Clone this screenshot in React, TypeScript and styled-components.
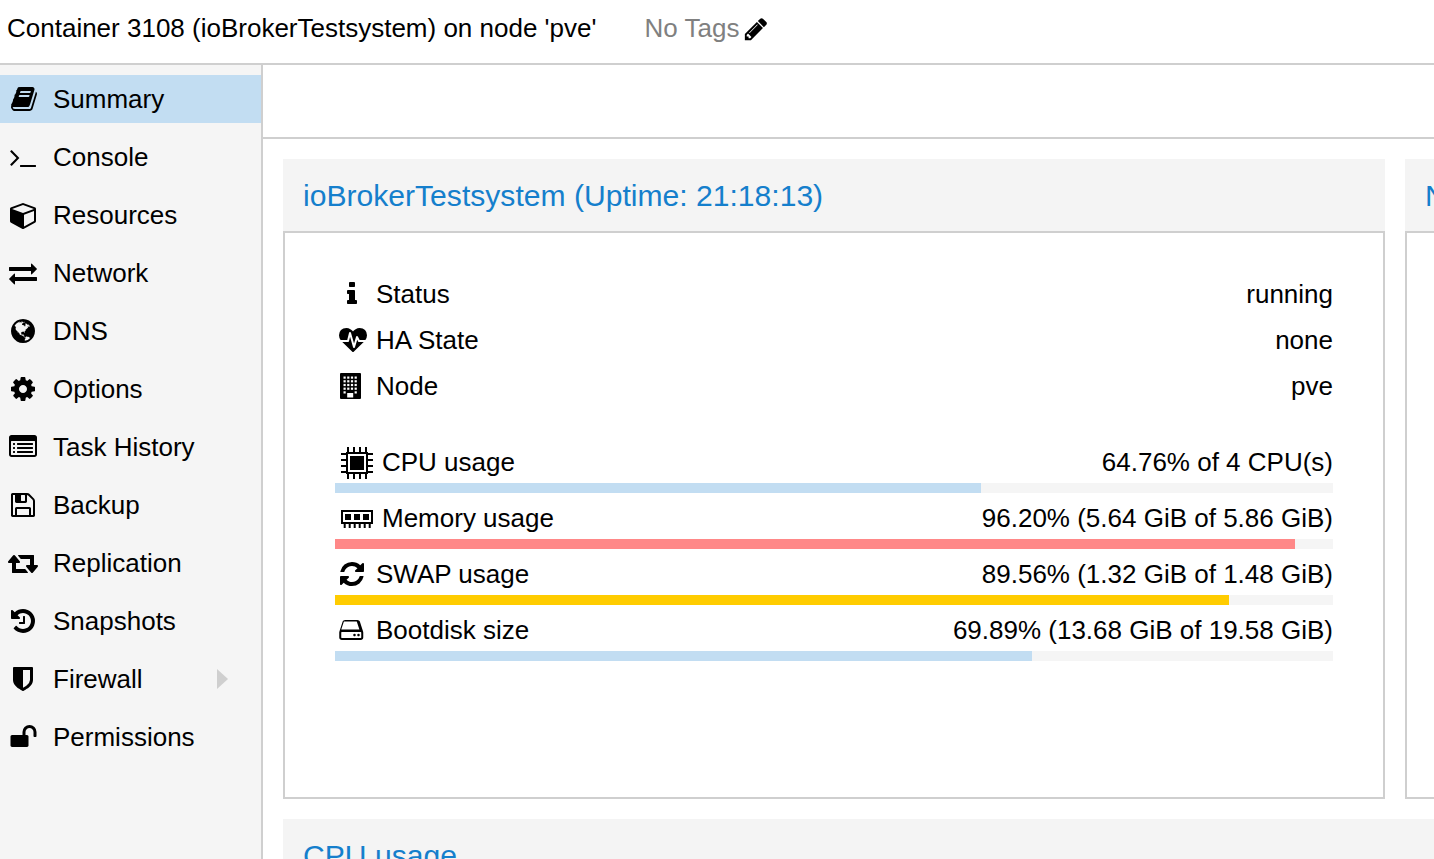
import React from 'react';
import styled, { createGlobalStyle } from 'styled-components';

const Global = createGlobalStyle`
  html, body { margin: 0; padding: 0; height: 100%; background: #fff; overflow: hidden; }
  body { font-family: "Liberation Sans", Arial, sans-serif; color: #000; }
  #root { height: 100vh; }
`;

const Page = styled.div`
  height: 859px;
  width: 1434px;
  display: flex;
  flex-direction: column;
  overflow: hidden;
`;

const Header = styled.header`
  height: 63px;
  flex: none;
  display: flex;
  align-items: center;
  padding: 0 0 6px 7px;
  box-sizing: border-box;
  font-size: 26px;
`;

const HeaderRule = styled.div`
  height: 2px;
  flex: none;
  background: #cfcfcf;
`;

const Title = styled.span`
  white-space: nowrap;
`;

const Tags = styled.span`
  margin-left: 48px;
  color: #808080;
  display: inline-flex;
  align-items: center;
  white-space: nowrap;
  gap: 4px;
`;

const Body = styled.div`
  flex: 1;
  min-height: 0;
  display: flex;
`;

const Sidebar = styled.nav`
  width: 261px;
  flex: none;
  box-sizing: content-box;
  background: #f5f5f5;
  border-right: 2px solid #cfcfcf;
  padding-top: 10px;
  display: flex;
  flex-direction: column;
  gap: 10px;
`;

const NavItem = styled.div<{ $active?: boolean }>`
  height: 48px;
  display: flex;
  align-items: center;
  font-size: 26px;
  background: ${p => (p.$active ? '#c2ddf2' : 'transparent')};
`;

const NavIconBox = styled.span`
  width: 44px;
  margin-left: 9px;
  flex: none;
  display: flex;
`;

const NavLabel = styled.span`
  flex: 1;
`;

const Chevron = styled.span`
  width: 0;
  height: 0;
  border-top: 10px solid transparent;
  border-bottom: 10px solid transparent;
  border-left: 11px solid #cfcfcf;
  margin-right: 33px;
`;

const Main = styled.main`
  flex: 1;
  min-width: 0;
  display: flex;
  flex-direction: column;
  overflow: hidden;
`;

const Toolbar = styled.div`
  height: 72px;
  flex: none;
  border-bottom: 2px solid #cfcfcf;
`;

const Content = styled.div`
  flex: 1;
  padding: 20px 0 0 20px;
  display: flex;
  flex-direction: column;
  gap: 20px;
  overflow: hidden;
`;

const PanelRow = styled.div`
  display: flex;
  gap: 20px;
  flex: none;
`;

const Panel = styled.section<{ $width: number }>`
  width: ${p => p.$width}px;
  flex: none;
`;

const PanelTitle = styled.h2`
  margin: 0;
  height: 72px;
  box-sizing: border-box;
  background: #f4f4f4;
  color: #157fcc;
  font-weight: 400;
  font-size: 30.1px;
  line-height: 74px;
  padding-left: 20px;
  white-space: nowrap;
  overflow: hidden;
`;

const PanelBody = styled.div`
  height: 568px;
  box-sizing: border-box;
  border: 2px solid #cfcfcf;
  padding: 38px 50px 0;
  font-size: 26px;
`;

const InfoRow = styled.div`
  height: 46px;
  display: flex;
  align-items: center;
  justify-content: space-between;
`;

const Label = styled.span`
  display: flex;
  align-items: center;
`;

const InfoIcon = styled.span`
  width: 41px;
  padding-left: 4px;
  box-sizing: border-box;
  display: flex;
  flex: none;
`;

const WideIcon = styled.span`
  width: 47px;
  padding-left: 6px;
  box-sizing: border-box;
  display: flex;
  flex: none;
`;

const Usage = styled.div`
  margin-bottom: 4px;
`;

const UsageList = styled.div`
  margin-top: 32px;
`;

const UsageText = styled.div`
  height: 42px;
  display: flex;
  align-items: center;
  justify-content: space-between;
`;

const Track = styled.div`
  height: 10px;
  background: #f5f5f5;
`;

const Fill = styled.div<{ $color: string }>`
  height: 100%;
  background: ${p => p.$color};
`;

const P = {
  book: 'M1639 478q40 57 18 129l-275 906q-19 64-76.5 107.5t-122.5 43.5h-923q-77 0-148.5-53.5t-99.5-131.5q-24-67-2-127 0-4 3-27t4-37q1-8-3-21.5t-3-19.5q2-11 8-21t16.5-23.5 16.5-23.5q23-38 45-91.5t30-91.5q3-10 .5-30t-.5-28q3-11 17-28t17-23q21-36 42-92t25-90q1-9-2.5-32t.5-28q4-13 22-30.5t22-22.5q19-26 42.5-84.5t27.5-96.5q1-8-3-25.5t-2-26.5q2-8 9-18t18-23 17-21q8-12 16.5-30.5t15-35 16-36 19.5-32 26.5-23.5 36-11.5 47.5 5.5l-1 3q38-9 51-9h761q74 0 114 56t18 130l-274 906q-36 119-71.5 153.5t-128.5 34.5h-869q-27 0-38 15-11 16-1 43 24 70 144 70h923q29 0 56-15.5t35-41.5l300-987q7-22 5-57 38 15 59 43zm-1064 2q-4 13 2 22.5t20 9.5h608q13 0 25.5-9.5t16.5-22.5l21-64q4-13-2-22.5t-20-9.5h-608q-13 0-25.5 9.5t-16.5 22.5zm-83 256q-4 13 2 22.5t20 9.5h608q13 0 25.5-9.5t16.5-22.5l21-64q4-13-2-22.5t-20-9.5h-608q-13 0-25.5 9.5t-16.5 22.5z',
  terminal: 'M649 983l-466 466q-10 10-23 10t-23-10l-50-50q-10-10-10-23t10-23l393-393-393-393q-10-10-10-23t10-23l50-50q10-10 23-10t23 10l466 466q10 10 10 23t-10 23zm1079 457v64q0 14-9 23t-23 9h-960q-14 0-23-9t-9-23v-64q0-14 9-23t23-9h960q14 0 23 9t9 23z',
  cube: 'M896 1629l640-349v-636l-640 233v752zm-64-865l698-254-698-254-698 254zm832-252v768q0 35-18 65t-49 47l-704 384q-28 16-61 16t-61-16l-704-384q-31-17-49-47t-18-65v-768q0-40 23-73t61-47l704-256q22-8 44-8t44 8l704 256q38 14 61 47t23 73z',
  exchange: 'M1792 1184v192q0 13-9.5 22.5t-22.5 9.5h-1376v192q0 13-9.5 22.5t-22.5 9.5q-12 0-24-10l-319-320q-9-9-9-22 0-14 9-23l320-320q9-9 23-9 13 0 22.5 9.5t9.5 22.5v192h1376q13 0 22.5 9.5t9.5 22.5zm0-544q0 14-9 23l-320 320q-9 9-23 9-13 0-22.5-9.5t-9.5-22.5v-192h-1376q-13 0-22.5-9.5t-9.5-22.5v-192q0-13 9.5-22.5t22.5-9.5h1376v-192q0-14 9-23t23-9q12 0 24 10l319 319q9 9 9 23z',
  globe: 'M896 128q209 0 385.5 103t279.5 279.5 103 385.5-103 385.5-279.5 279.5-385.5 103-385.5-103-279.5-279.5-103-385.5 103-385.5 279.5-279.5 385.5-103zm274 521q-2 1-9.5 9.5t-13.5 9.5q2 0 4.5-5t5-11 3.5-7q6-7 22-15 14-6 52-12 34-8 51 11-2-2 9.5-13t14.5-12q3-2 15-4.5t15-7.5l2-22q-12 1-17.5-7t-6.5-21q0 2-6 8 0-7-4.5-8t-11.5 1-9 1q-10-3-15-7.5t-8-16.5-4-15q-2-5-9.5-11t-9.5-10q-1-2-2.5-5.5t-3-6.5-4-5.5-5.5-2.5-7 5-7.5 10-4.5 5q-3-2-6-1.5t-4.5 1-4.5 3-5 3.5q-3 2-8.5 3t-8.5 2q15-5-1-11-10-4-16-3 9-4 7.5-12t-8.5-14h5q-1-4-8.5-8.5t-17.5-8.5-13-6q-8-5-34-9.5t-33-.5q-5 6-4.5 10.5t4 14 3.5 12.5q1 6-5.5 13t-6.5 12q0 7 14 15.5t10 21.5q-3 8-16 16t-16 12q-5 8-1.5 18.5t10.5 16.5q2 2 1.5 4t-3.5 4.5-5.5 4-6.5 3.5l-3 2q-11 5-20.5-6t-13.5-26q-7-25-16-30-23-8-29 1-5-13-41-26-25-9-58-4 6-1 0-15-7-15-19-12 3-6 4-17.5t1-13.5q3-13 12-23 1-1 7-8.5t9.5-13.5.5-6q35 4 50-11 5-5 11.5-17t10.5-17q9-6 14-5.5t14.5 5.5 14.5 5q14 1 15.5-11t-7.5-20q12 1 3-17-5-7-8-9-12-4-27 5-8 4 2 8-1-1-9.5 10.5t-16.5 17.5-14-5q-1-1-5.5-13.5t-9.5-13.5q-8 0-16 15 3-8-11-15t-24-8q19-12-8-27-7-4-20.5-5t-19.5 4q-5 7-5.5 11.5t5 8 10.5 5.5 11.5 4 8.5 3q14 10 8 14-2 1-8.5 3.5t-11.5 4.5-6 4q-3 4 0 14t-2 14q-5-5-9-17.5t-7-16.5q7 9-25 6l-10-1q-4 0-16 2t-20.5 1-13.5-8q-4-8 0-20 1-4 4-2-4-3-11-9.5t-10-8.5q-46 15-94 41 6 1 12-1 5-2 13-6.5t10-5.5q34-14 42-7l5-5q14 16 20 25-7-4-30-1-20 6-22 12 7 12 5 18-4-3-11.5-10t-14.5-11-15-5q-16 0-22 1-146 80-235 222 7 7 12 8 4 1 5 9t2.5 11 11.5-3q9 8 3 19 1-1 44 27 19 17 21 21 3 11-10 18-1-2-9-9t-9-4q-3 5 .5 18.5t10.5 12.5q-7 0-9.5 16t-2.5 35.5-1 23.5l2 1q-3 12 5.5 34.5t21.5 19.5q-13 3 20 43 6 8 8 9 3 2 12 7.5t15 10 10 10.5q4 5 10 22.5t14 23.5q-2 6 9.5 20t10.5 23q-1 0-2.5 1t-2.5 1q3 7 15.5 14t15.5 13q1 3 2 10t3 11 8 2q2-20-24-62-15-25-17-29-3-5-5.5-15.5t-4.5-14.5q2 0 6 1.5t8.5 3.5 7.5 4 2 3q-3 7 2 17.5t12 18.5 17 19 12 13q6 6 14 19.5t0 13.5q9 0 20 10.5t17 19.5q5 8 8 26t5 24q2 7 8.5 13.5t12.5 9.5l16 8 13 7q5 2 18.5 10.5t21.5 11.5q10 4 16 4t14.5-2.5 13.5-3.5q15-2 29 15t21 21q36 19 55 11-2 1 .5 7.5t8 15.5 9 14.5 5.5 8.5q5 6 18 15t18 15q6-4 7-9-3 8 7 20t18 10q14-3 14-32-31 15-49-18 0-1-2.5-5.5t-4-8.5-2.5-8.5 0-7.5 5-3q9 0 10-3.5t-2-12.5-4-13q-1-8-11-20t-12-15q-5 9-16 8t-16-9q0 1-1.5 5.5t-1.5 6.5q-13 0-15-1 1-3 2.5-17.5t3.5-22.5q1-4 5.5-12t7.5-14.5 4-12.5-4.5-9.5-17.5-2.5q-19 1-26 20-1 3-3 10.5t-5 11.5-9 7q-7 3-24 2t-24-5q-13-8-22.5-29t-9.5-37q0-10 2.5-26.5t3-25-5.5-24.5q3-2 9-9.5t10-10.5q2-1 4.5-1.5t4.5 0 4-1.5 3-6q-1-1-4-3-3-3-4-3 7 3 28.5-1.5t27.5 1.5q15 11 22-2 0-1-2.5-9.5t-.5-13.5q5 27 29 9 3 3 15.5 5t17.5 5q3 2 7 5.5t5.5 4.5 5-.5 8.5-6.5q10 14 12 24 11 40 19 44 7 3 11 2t4.5-9.5 0-14-1.5-12.5l-1-8v-18l-1-8q-15-3-18.5-12t1.5-18.5 15-18.5q1-1 8-3.5t15.5-6.5 12.5-8q21-19 15-35 7 0 11-9-1 0-5-3t-7.5-5-4.5-2q9-5 2-16 5-3 7.5-11t7.5-10q9 12 21 2 8-8 1-16 5-7 20.5-10.5t18.5-9.5q7 2 8-2t1-12 3-12q4-5 15-9t13-5l17-11q3-4 0-4 18 2 31-11 10-11-6-20 3-6-3-9.5t-15-5.5q3-1 11.5-.5t10.5-1.5q15-10-7-16-17-5-43 12zm-163 877q206-36 351-189-3-3-12.5-4.5t-12.5-3.5q-18-7-24-8 1-7-2.5-13t-8-9-12.5-8-11-7q-2-2-7-6t-7-5.5-7.5-4.5-8.5-2-10 1l-3 1q-3 1-5.5 2.5t-5.5 3-4 3 0 2.5q-21-17-36-22-5-1-11-5.5t-10.5-7-10-1.5-11.5 7q-5 5-6 15t-2 13q-7-5 0-17.5t2-18.5q-3-6-10.5-4.5t-12 4.5-11.5 8.5-9 6.5-8.5 5.5-8.5 7.5q-3 4-6 12t-5 11q-2-4-11.5-6.5t-9.5-5.5q2 10 4 35t5 38q7 31-12 48-27 25-29 40-4 22 12 26 0 7-8 20.5t-7 21.5q0 6 2 16z',
  cog: 'M1152 896q0-106-75-181t-181-75-181 75-75 181 75 181 181 75 181-75 75-181zm512-109v222q0 12-8 23t-20 13l-185 28q-19 54-39 91 35 50 107 138 10 12 10 25t-9 23q-27 37-99 108t-94 71q-12 0-26-9l-138-108q-44 23-91 38-16 136-29 186-7 28-36 28h-222q-14 0-24.5-8.5t-11.5-21.5l-28-184q-49-16-90-37l-141 107q-10 9-25 9-14 0-25-11-126-114-165-168-7-10-7-23 0-12 8-23 15-21 51-66.5t54-70.5q-27-50-41-99l-183-27q-13-2-21-12.5t-8-23.5v-222q0-12 8-23t19-13l186-28q14-46 39-92-40-57-107-138-10-12-10-24 0-10 9-23 26-36 98.5-107.5t94.5-71.5q13 0 26 10l138 107q44-23 91-38 16-136 29-186 7-28 36-28h222q14 0 24.5 8.5t11.5 21.5l28 184q49 16 90 37l142-107q9-9 24-9 13 0 25 10 129 119 165 170 7 8 7 22 0 12-8 23-15 21-51 66.5t-54 70.5q26 50 41 98l183 28q13 2 21 12.5t8 23.5z',
  list: 'M384 1184v64q0 13-9.5 22.5t-22.5 9.5h-64q-13 0-22.5-9.5t-9.5-22.5v-64q0-13 9.5-22.5t22.5-9.5h64q13 0 22.5 9.5t9.5 22.5zm0-256v64q0 13-9.5 22.5t-22.5 9.5h-64q-13 0-22.5-9.5t-9.5-22.5v-64q0-13 9.5-22.5t22.5-9.5h64q13 0 22.5 9.5t9.5 22.5zm0-256v64q0 13-9.5 22.5t-22.5 9.5h-64q-13 0-22.5-9.5t-9.5-22.5v-64q0-13 9.5-22.5t22.5-9.5h64q13 0 22.5 9.5t9.5 22.5zm1152 512v64q0 13-9.5 22.5t-22.5 9.5h-960q-13 0-22.5-9.5t-9.5-22.5v-64q0-13 9.5-22.5t22.5-9.5h960q13 0 22.5 9.5t9.5 22.5zm0-256v64q0 13-9.5 22.5t-22.5 9.5h-960q-13 0-22.5-9.5t-9.5-22.5v-64q0-13 9.5-22.5t22.5-9.5h960q13 0 22.5 9.5t9.5 22.5zm0-256v64q0 13-9.5 22.5t-22.5 9.5h-960q-13 0-22.5-9.5t-9.5-22.5v-64q0-13 9.5-22.5t22.5-9.5h960q13 0 22.5 9.5t9.5 22.5zm128 704v-832q0-13-9.5-22.5t-22.5-9.5h-1472q-13 0-22.5 9.5t-9.5 22.5v832q0 13 9.5 22.5t22.5 9.5h1472q13 0 22.5-9.5t9.5-22.5zm128-1088v1088q0 66-47 113t-113 47h-1472q-66 0-113-47t-47-113v-1088q0-66 47-113t113-47h1472q66 0 113 47t47 113z',
  floppy: 'M512 1536h768v-384h-768v384zm896 0h128v-896q0-14-10-38.5t-20-34.5l-281-281q-10-10-34-20t-39-10v416q0 40-28 68t-68 28h-576q-40 0-68-28t-28-68v-416h-128v1280h128v-416q0-40 28-68t68-28h832q40 0 68 28t28 68v416zm-384-928v-320q0-13-9.5-22.5t-22.5-9.5h-192q-13 0-22.5 9.5t-9.5 22.5v320q0 13 9.5 22.5t22.5 9.5h192q13 0 22.5-9.5t9.5-22.5zm640 32v928q0 40-28 68t-68 28h-1344q-40 0-68-28t-28-68v-1344q0-40 28-68t68-28h928q40 0 88 20t76 48l280 280q28 28 48 76t20 88z',
  retweet: 'M1152 1504q0 13-9.5 22.5t-22.5 9.5h-960q-8 0-13.5-2t-9-7-5.5-8-3-11.5-1-11.5v-600h-192q-26 0-45-19t-19-45q0-24 15-41l320-384q19-22 49-22t49 22l320 384q15 17 15 41 0 26-19 45t-45 19h-192v384h576q16 0 25 11l160 192q7 10 7 21zm640-416q0 24-15 41l-320 384q-20 23-49 23t-49-23l-320-384q-15-17-15-41 0-26 19-45t45-19h192v-384h-576q-16 0-25-12l-160-192q-7-9-7-20 0-13 9.5-22.5t22.5-9.5h960q8 0 13.5 2t9 7 5.5 8 3 11.5 1 11.5v600h192q26 0 45 19t19 45z',
  history: 'M1664 896q0 156-61 298t-164 245-245 164-298 61q-172 0-327-72.5t-264-204.5q-7-10-6.5-22.5t8.5-20.5l137-138q10-9 25-9 16 2 23 12 73 95 179 147t225 52q104 0 198.5-40.5t163.5-109.5 109.5-163.5 40.5-198.5-40.5-198.5-109.5-163.5-163.5-109.5-198.5-40.5q-98 0-188 35.5t-160 101.5l137 138q31 30 14 69-17 40-59 40h-448q-26 0-45-19t-19-45v-448q0-42 40-59 39-17 69 14l130 129q107-101 244.5-156.5t284.5-55.5q156 0 298 61t245 164 164 245 61 298zm-640-288v448q0 14-9 23t-23 9h-320q-14 0-23-9t-9-23v-64q0-14 9-23t23-9h224v-352q0-14 9-23t23-9h64q14 0 23 9t9 23z',
  shield: 'M1344 960v-640h-448v1137q119-63 213-137 235-184 235-360zm192-768v768q0 86-33.5 170.5t-83 150-118 127.5-126.5 103-121 77.5-89.5 49.5-42.5 20q-12 6-26 6t-26-6q-16-7-42.5-20t-89.5-49.5-121-77.5-126.5-103-118-127.5-83-150-33.5-170.5v-768q0-26 19-45t45-19h1152q26 0 45 19t19 45z',
  unlock: 'M1728 576v256q0 26-19 45t-45 19h-64q-26 0-45-19t-19-45v-256q0-106-75-181t-181-75-181 75-75 181v192h96q40 0 68 28t28 68v576q0 40-28 68t-68 28h-960q-40 0-68-28t-28-68v-576q0-40 28-68t68-28h672v-192q0-185 131.5-316.5t316.5-131.5 316.5 131.5 131.5 316.5z',
  info: 'M1216 1344v128q0 26-19 45t-45 19h-512q-26 0-45-19t-19-45v-128q0-26 19-45t45-19h64v-384h-64q-26 0-45-19t-19-45v-128q0-26 19-45t45-19h384q26 0 45 19t19 45v576h64q26 0 45 19t19 45zm-128-1152v192q0 26-19 45t-45 19h-256q-26 0-45-19t-19-45v-192q0-26 19-45t45-19h256q26 0 45 19t19 45z',
  heartbeat: 'M1280 1024h305q-5 6-10 10.5t-9 7.5l-3 4-623 600q-18 18-44 18t-44-18l-624-602q-5-2-21-20h369q22 0 39.5-13.5t22.5-34.5l70-281 190 667q6 20 23 33t39 13q21 0 38-13t23-33l146-485 56 112q18 35 57 35zm512-428q0 145-103 300h-369l-111-221q-8-17-25.5-27t-36.5-8q-45 5-56 46l-129 430-196-686q-6-20-23.5-33t-39.5-13-39 13.5-22 34.5l-116 464h-423q-103-155-103-300 0-220 127-344t351-124q62 0 126.5 21.5t120 58 95.5 68.5 76 68q36-36 76-68t95.5-68.5 120-58 126.5-21.5q224 0 351 124t127 344z',
  refresh: 'M1639 1056q0 5-1 7-64 268-268 434.5t-478 166.5q-146 0-282.5-55t-243.5-157l-129 129q-19 19-45 19t-45-19-19-45v-448q0-26 19-45t45-19h448q26 0 45 19t19 45-19 45l-137 137q71 66 161 102t187 36q134 0 250-65t186-179q11-17 53-117 8-23 30-23h192q13 0 22.5 9.5t9.5 22.5zm25-800v448q0 26-19 45t-45 19h-448q-26 0-45-19t-19-45 19-45l138-138q-148-137-349-137-134 0-250 65t-186 179q-11 17-53 117-8 23-30 23h-199q-13 0-22.5-9.5t-9.5-22.5v-7q65-268 270-434.5t480-166.5q146 0 284 55.5t245 156.5l130-129q19-19 45-19t45 19 19 45z',
  hdd: 'M1040 1216q0 33-23.5 56.5t-56.5 23.5-56.5-23.5-23.5-56.5 23.5-56.5 56.5-23.5 56.5 23.5 23.5 56.5zm256 0q0 33-23.5 56.5t-56.5 23.5-56.5-23.5-23.5-56.5 23.5-56.5 56.5-23.5 56.5 23.5 23.5 56.5zm96 160v-320q0-13-9.5-22.5t-22.5-9.5h-1216q-13 0-22.5 9.5t-9.5 22.5v320q0 13 9.5 22.5t22.5 9.5h1216q13 0 22.5-9.5t9.5-22.5zm-1280-512h1161l-158-485q-4-13-16-21.5t-26-8.5h-761q-14 0-26 8.5t-16 21.5zm1408 192v320q0 66-47 113t-113 47h-1216q-66 0-113-47t-47-113v-320q0-25 16-75l197-606q17-53 63-86t101-33h782q55 0 101 33t63 86l197 606q16 50 16 75z',
  pencil: 'M491 1536l91-91-235-235-91 91v107h128v128h107zm523-928q0-22-22-22-10 0-17 7l-542 542q-7 7-7 17 0 22 22 22 10 0 17-7l542-542q7-7 7-17zm-54-192l416 416-832 832h-416v-416zm683 96q0 53-37 90l-166 166-416-416 166-165q36-38 90-38 53 0 91 38l235 234q37 39 37 91z',
};

const GlyphSvg = styled.svg`
  display: block;
  flex: none;
  fill: #000;
  overflow: visible;
`;

const BuildingSvg = styled(GlyphSvg)`
  margin-left: 1px;
`;

const Glyph = ({ d, vb = '0 0 1792 1792', w = 28, h = 28 }: { d: string; vb?: string; w?: number; h?: number }) => (
  <GlyphSvg width={w} height={h} viewBox={vb}>
    <path d={d} />
  </GlyphSvg>
);

const Building = () => {
  const cols = [3.5, 7.2, 10.9, 14.6];
  const rows = [3.5, 7.2, 10.9, 14.6];
  return (
    <BuildingSvg width="21" height="26" viewBox="0 0 21 26">
      <rect x="0" y="0" width="21" height="26" rx="1" />
      {rows.map(y =>
        cols.map(x => <rect key={`${x}-${y}`} x={x} y={y} width="2.2" height="2.2" fill="#fff" />),
      )}
      <rect x="3.5" y="18.3" width="2.2" height="2.2" fill="#fff" />
      <rect x="14.6" y="18.3" width="2.2" height="2.2" fill="#fff" />
      <rect x="7.2" y="20" width="6" height="4.5" fill="#fff" />
    </BuildingSvg>
  );
};

const Cpu = () => {
  const pins = [6, 12, 18, 24];
  return (
    <GlyphSvg width="32" height="33" viewBox="0 -1 32 33">
      {pins.map(p => (
        <g key={p}>
          <rect x={p} y="0" width="2" height="5" />
          <rect x={p} y="27" width="2" height="5" />
          <rect x="0" y={p} width="5" height="2" />
          <rect x="27" y={p} width="5" height="2" />
        </g>
      ))}
      <rect x="6" y="6" width="20" height="20" fill="none" stroke="#000" strokeWidth="2" />
      <rect x="9" y="9" width="14" height="14" />
    </GlyphSvg>
  );
};

const Memory = () => (
  <GlyphSvg width="32" height="20" viewBox="0 -2 32 20">
    <rect x="1" y="1" width="30" height="12" fill="none" stroke="#000" strokeWidth="2" />
    <rect x="4" y="4" width="6" height="6" />
    <rect x="13" y="4" width="6" height="6" />
    <rect x="22" y="4" width="6" height="6" />
    {[2.7, 7.7, 12.7, 17.7, 22.7, 27.7].map(x => (
      <rect key={x} x={x} y="14" width="2" height="4" />
    ))}
  </GlyphSvg>
);

const navItems: { label: string; d: string; vb?: string; w?: number; active?: boolean }[] = [
  { label: 'Summary', d: P.book, vb: '-128 0 1792 1792', active: true },
  { label: 'Console', d: P.terminal },
  { label: 'Resources', d: P.cube, vb: '-64 0 1792 1792' },
  { label: 'Network', d: P.exchange },
  { label: 'DNS', d: P.globe, vb: '0 0 1792 1792' },
  { label: 'Options', d: P.cog, vb: '0 0 1792 1792' },
  { label: 'Task History', d: P.list },
  { label: 'Backup', d: P.floppy, vb: '0 0 1792 1792' },
  { label: 'Replication', d: P.retweet, vb: '-64 0 1920 1792', w: 30 },
  { label: 'Snapshots', d: P.history, vb: '0 0 1792 1792' },
  { label: 'Firewall', d: P.shield, vb: '0 0 1792 1792' },
  { label: 'Permissions', d: P.unlock, vb: '-32 0 1792 1792' },
];

const usages = [
  { label: 'CPU usage', icon: 'cpu', value: '64.76% of 4 CPU(s)', pct: 64.76, color: '#c2ddf2' },
  { label: 'Memory usage', icon: 'mem', value: '96.20% (5.64 GiB of 5.86 GiB)', pct: 96.2, color: '#ff8888' },
  { label: 'SWAP usage', icon: 'swap', value: '89.56% (1.32 GiB of 1.48 GiB)', pct: 89.56, color: '#ffcc00' },
  { label: 'Bootdisk size', icon: 'disk', value: '69.89% (13.68 GiB of 19.58 GiB)', pct: 69.85, color: '#c2ddf2' },
];

const usageIcon = (k: string) => {
  if (k === 'cpu') return <WideIcon><Cpu /></WideIcon>;
  if (k === 'mem') return <WideIcon><Memory /></WideIcon>;
  if (k === 'swap') return <InfoIcon><Glyph d={P.refresh} vb="64 0 1792 1792" /></InfoIcon>;
  return <InfoIcon><Glyph d={P.hdd} vb="-32 0 1792 1792" /></InfoIcon>;
};

export default function App() {
  return (
    <Page>
      <Global />
      <Header>
        <Title>Container 3108 (ioBrokerTestsystem) on node 'pve'</Title>
        <Tags>
          No Tags
          <Glyph d={P.pencil} w={26} h={26} />
        </Tags>
      </Header>
      <HeaderRule />
      <Body>
        <Sidebar>
          {navItems.map(n => (
            <NavItem key={n.label} $active={n.active}>
              <NavIconBox><Glyph d={n.d} vb={n.vb} w={n.w} /></NavIconBox>
              <NavLabel>{n.label}</NavLabel>
              {n.label === 'Firewall' && <Chevron />}
            </NavItem>
          ))}
        </Sidebar>
        <Main>
          <Toolbar />
          <Content>
            <PanelRow>
              <Panel $width={1102}>
                <PanelTitle>ioBrokerTestsystem (Uptime: 21:18:13)</PanelTitle>
                <PanelBody>
                  <InfoRow>
                    <Label><InfoIcon><Glyph d={P.info} vb="64 0 1792 1792" /></InfoIcon>Status</Label>
                    <span>running</span>
                  </InfoRow>
                  <InfoRow>
                    <Label><InfoIcon><Glyph d={P.heartbeat} /></InfoIcon>HA State</Label>
                    <span>none</span>
                  </InfoRow>
                  <InfoRow>
                    <Label><InfoIcon><Building /></InfoIcon>Node</Label>
                    <span>pve</span>
                  </InfoRow>
                  <UsageList>
                    {usages.map(u => (
                      <Usage key={u.label}>
                        <UsageText>
                          <Label>{usageIcon(u.icon)}{u.label}</Label>
                          <span>{u.value}</span>
                        </UsageText>
                        <Track>
                          <Fill $color={u.color} style={{ width: `${u.pct}%` }} />
                        </Track>
                      </Usage>
                    ))}
                  </UsageList>
                </PanelBody>
              </Panel>
              <Panel $width={400}>
                <PanelTitle>Notes</PanelTitle>
                <PanelBody />
              </Panel>
            </PanelRow>
            <Panel $width={1300}>
              <PanelTitle>CPU usage</PanelTitle>
            </Panel>
          </Content>
        </Main>
      </Body>
    </Page>
  );
}
